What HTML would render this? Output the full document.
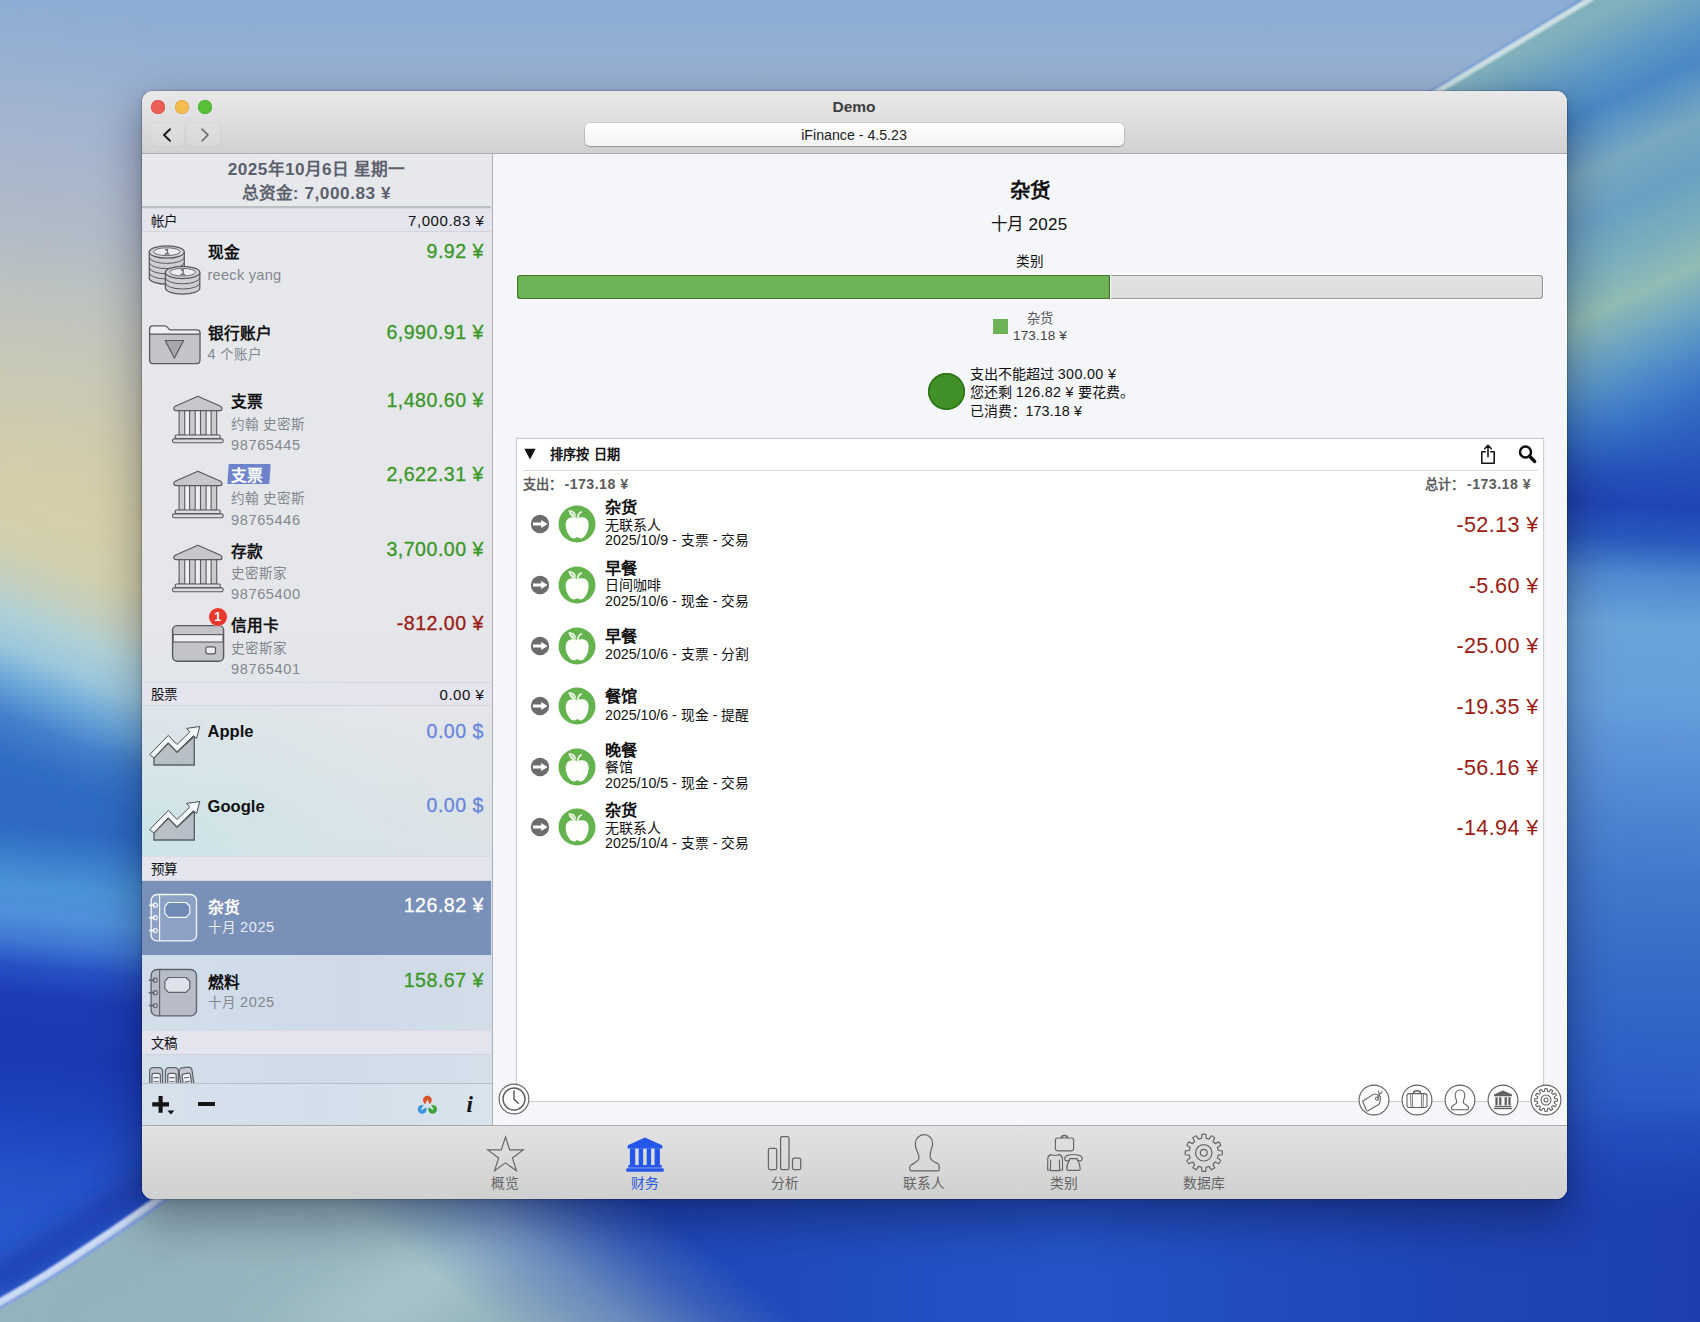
<!DOCTYPE html>
<html lang="zh-CN">
<head>
<meta charset="utf-8">
<title>Demo - iFinance</title>
<style>
*{box-sizing:border-box;margin:0;padding:0}
html,body{width:1700px;height:1322px;overflow:hidden}
body{position:relative;font-family:"Liberation Sans",sans-serif;background:#2a55c0;color:#111}
.abs{position:absolute}
.t{position:absolute;white-space:nowrap;line-height:1}
.b{font-weight:bold}
.r{text-align:right}
.c{text-align:center}
svg{position:absolute;overflow:visible}

#win{position:absolute;left:142px;top:91px;width:1425px;height:1108px;border-radius:11px;background:#f5f6fa;overflow:hidden;
 box-shadow:0 0 0 .6px rgba(0,0,0,.28),0 18px 44px 4px rgba(0,0,28,.33),0 3px 10px rgba(0,0,0,.12)}
#titlebar{position:absolute;left:0;top:0;width:1425px;height:63px;background:linear-gradient(180deg,#e8e8e8 0,#e0e0e0 40%,#d1d1d1 100%);border-bottom:1px solid #adadad}
#botbar{position:absolute;left:0;top:1034px;width:1425px;height:74px;background:linear-gradient(180deg,#e2e2e2 0,#d9d9d9 50%,#cfd0d0 100%);border-top:1px solid #a9a9a9}
#side{position:absolute;left:0;top:62px;width:350px;height:972px;background:#e3e5ea;border-right:1px solid #b9bbc0;overflow:hidden}
.sec{position:absolute;left:0;width:349px;background:#e3e4ee;border-top:1px solid #d2d4dc;border-bottom:1px solid #d6d8e0}
</style>
</head>
<body>
<svg style="left:0;top:0" width="1700" height="1322" viewBox="0 0 1700 1322"><defs><linearGradient id="wl" x1="0" y1="0" x2="0" y2="1"><stop offset="0.0000" stop-color="#8aacd4"/><stop offset="0.0454" stop-color="#95afd2"/><stop offset="0.0908" stop-color="#a0b3d0"/><stop offset="0.1362" stop-color="#a9b6cc"/><stop offset="0.1891" stop-color="#b2bcc6"/><stop offset="0.2269" stop-color="#bcc2c0"/><stop offset="0.2874" stop-color="#c8c8b6"/><stop offset="0.3404" stop-color="#d0cbae"/><stop offset="0.3933" stop-color="#d5cea8"/><stop offset="0.4349" stop-color="#d3cfac"/><stop offset="0.4614" stop-color="#c4cfbc"/><stop offset="0.4841" stop-color="#b0d0d6"/><stop offset="0.5068" stop-color="#9ac7dc"/><stop offset="0.5295" stop-color="#6ba6d8"/><stop offset="0.5522" stop-color="#4381cc"/><stop offset="0.5825" stop-color="#2f6cc4"/><stop offset="0.6278" stop-color="#2e6ac4"/><stop offset="0.6505" stop-color="#3a7ecc"/><stop offset="0.6732" stop-color="#4a92d6"/><stop offset="0.6959" stop-color="#4e90da"/><stop offset="0.7148" stop-color="#4078d4"/><stop offset="0.7337" stop-color="#2852c4"/><stop offset="0.7564" stop-color="#1c3cb4"/><stop offset="0.8018" stop-color="#1a3ab2"/><stop offset="0.8472" stop-color="#1d44bc"/><stop offset="0.8926" stop-color="#2652c8"/><stop offset="0.9455" stop-color="#2a5ace"/><stop offset="1.0000" stop-color="#2c5ccf"/></linearGradient><linearGradient id="wl2" gradientUnits="userSpaceOnUse" x1="75" y1="-5.0" x2="75" y2="1324.3" gradientTransform="rotate(6 75 900)"><stop offset="0.0000" stop-color="#8aacd4"/><stop offset="0.0454" stop-color="#95afd2"/><stop offset="0.0908" stop-color="#a0b3d0"/><stop offset="0.1362" stop-color="#a9b6cc"/><stop offset="0.1891" stop-color="#b2bcc6"/><stop offset="0.2269" stop-color="#bcc2c0"/><stop offset="0.2874" stop-color="#c8c8b6"/><stop offset="0.3404" stop-color="#d0cbae"/><stop offset="0.3933" stop-color="#d5cea8"/><stop offset="0.4349" stop-color="#d3cfac"/><stop offset="0.4614" stop-color="#c4cfbc"/><stop offset="0.4841" stop-color="#b0d0d6"/><stop offset="0.5068" stop-color="#9ac7dc"/><stop offset="0.5295" stop-color="#6ba6d8"/><stop offset="0.5522" stop-color="#4381cc"/><stop offset="0.5825" stop-color="#2f6cc4"/><stop offset="0.6278" stop-color="#2e6ac4"/><stop offset="0.6505" stop-color="#3a7ecc"/><stop offset="0.6732" stop-color="#4a92d6"/><stop offset="0.6959" stop-color="#4e90da"/><stop offset="0.7148" stop-color="#4078d4"/><stop offset="0.7337" stop-color="#2852c4"/><stop offset="0.7564" stop-color="#1c3cb4"/><stop offset="0.8018" stop-color="#1a3ab2"/><stop offset="0.8472" stop-color="#1d44bc"/><stop offset="0.8926" stop-color="#2652c8"/><stop offset="0.9455" stop-color="#2a5ace"/><stop offset="1.0000" stop-color="#2c5ccf"/></linearGradient><linearGradient id="wl3" gradientUnits="userSpaceOnUse" x1="75" y1="-51.0" x2="75" y2="1374.8" gradientTransform="rotate(22 75 650)"><stop offset="0.0000" stop-color="#8aacd4"/><stop offset="0.0454" stop-color="#95afd2"/><stop offset="0.0908" stop-color="#a0b3d0"/><stop offset="0.1362" stop-color="#a9b6cc"/><stop offset="0.1891" stop-color="#b2bcc6"/><stop offset="0.2269" stop-color="#bcc2c0"/><stop offset="0.2874" stop-color="#c8c8b6"/><stop offset="0.3404" stop-color="#d0cbae"/><stop offset="0.3933" stop-color="#d5cea8"/><stop offset="0.4349" stop-color="#d3cfac"/><stop offset="0.4614" stop-color="#c4cfbc"/><stop offset="0.4841" stop-color="#b0d0d6"/><stop offset="0.5068" stop-color="#9ac7dc"/><stop offset="0.5295" stop-color="#6ba6d8"/><stop offset="0.5522" stop-color="#4381cc"/><stop offset="0.5825" stop-color="#2f6cc4"/><stop offset="0.6278" stop-color="#2e6ac4"/><stop offset="0.6505" stop-color="#3a7ecc"/><stop offset="0.6732" stop-color="#4a92d6"/><stop offset="0.6959" stop-color="#4e90da"/><stop offset="0.7148" stop-color="#4078d4"/><stop offset="0.7337" stop-color="#2852c4"/><stop offset="0.7564" stop-color="#1c3cb4"/><stop offset="0.8018" stop-color="#1a3ab2"/><stop offset="0.8472" stop-color="#1d44bc"/><stop offset="0.8926" stop-color="#2652c8"/><stop offset="0.9455" stop-color="#2a5ace"/><stop offset="1.0000" stop-color="#2c5ccf"/></linearGradient><linearGradient id="fl" gradientUnits="userSpaceOnUse" x1="0" y1="420" x2="0" y2="860"><stop offset="0" stop-color="#000"/><stop offset=".25" stop-color="#fff"/><stop offset=".73" stop-color="#fff"/><stop offset="1" stop-color="#000"/></linearGradient><mask id="ml"><rect x="-5" y="0" width="160" height="900" fill="url(#fl)"/></mask><linearGradient id="wru" gradientUnits="userSpaceOnUse" x1="1634" y1="-200" x2="1634" y2="800" gradientTransform="rotate(-25 1634 300)"><stop offset="0.1195" stop-color="#86b4bc"/><stop offset="0.2282" stop-color="#80b0bc"/><stop offset="0.2735" stop-color="#5f98c4"/><stop offset="0.3097" stop-color="#4a88c6"/><stop offset="0.3641" stop-color="#78a8c0"/><stop offset="0.4094" stop-color="#6aa0c2"/><stop offset="0.4547" stop-color="#7aaebd"/><stop offset="0.4955" stop-color="#90bcb4"/><stop offset="0.5362" stop-color="#6da4c2"/><stop offset="0.5725" stop-color="#4f8cc8"/><stop offset="0.6132" stop-color="#3670c6"/><stop offset="0.6540" stop-color="#2752ba"/><stop offset="0.6857" stop-color="#1f45b4"/><stop offset="0.7356" stop-color="#2a5abe"/></linearGradient><linearGradient id="wrl" gradientUnits="userSpaceOnUse" x1="1634" y1="0" x2="1634" y2="1322" gradientTransform="rotate(3 1634 500)"><stop offset="0.2874" stop-color="#4f8cc8"/><stop offset="0.3215" stop-color="#3670c6"/><stop offset="0.3555" stop-color="#2752ba"/><stop offset="0.3820" stop-color="#1f45b4"/><stop offset="0.4085" stop-color="#2a5abe"/><stop offset="0.4349" stop-color="#5088cf"/><stop offset="0.4728" stop-color="#6aa2da"/><stop offset="0.5295" stop-color="#669edb"/><stop offset="0.5749" stop-color="#5a90d6"/><stop offset="0.6203" stop-color="#4d84d0"/><stop offset="0.6657" stop-color="#4278cc"/><stop offset="0.7262" stop-color="#386cc8"/><stop offset="0.8018" stop-color="#2e5fc6"/><stop offset="0.8699" stop-color="#2753c2"/><stop offset="0.9455" stop-color="#1f44b6"/><stop offset="1.0000" stop-color="#1c3cac"/></linearGradient><linearGradient id="fu" gradientUnits="userSpaceOnUse" x1="0" y1="395" x2="0" y2="500"><stop offset="0" stop-color="#fff"/><stop offset="1" stop-color="#000"/></linearGradient><mask id="mu"><rect x="1380" y="-20" width="340" height="600" fill="url(#fu)"/></mask><linearGradient id="wrm" x1="0" y1="0" x2="1" y2="0"><stop offset="0" stop-color="#fff" stop-opacity="0"/><stop offset=".45" stop-color="#fff" stop-opacity="1"/></linearGradient><mask id="mr"><rect x="1380" y="1150" width="320" height="172" fill="url(#wrm)"/></mask><linearGradient id="wb" x1="0" y1="0" x2="1" y2="0"><stop offset="0" stop-color="#2450c0"/><stop offset=".25" stop-color="#1f47b8"/><stop offset=".55" stop-color="#2553c6"/><stop offset=".8" stop-color="#1f46b6"/><stop offset="1" stop-color="#1d3fae"/></linearGradient><linearGradient id="wbm" x1="0" y1="0" x2="0" y2="1"><stop offset="0" stop-color="#fff" stop-opacity="0"/><stop offset=".5" stop-color="#fff" stop-opacity="1"/></linearGradient><mask id="mb"><rect x="300" y="1100" width="1400" height="222" fill="url(#wbm)"/></mask><filter id="b12" x="-20%" y="-20%" width="140%" height="140%"><feGaussianBlur stdDeviation="12"/></filter><filter id="b30" x="-30%" y="-30%" width="160%" height="160%"><feGaussianBlur stdDeviation="28"/></filter><filter id="b2" x="-20%" y="-20%" width="140%" height="140%"><feGaussianBlur stdDeviation="1.1"/></filter><clipPath id="cr1"><path d="M1430 94 Q1511 45 1590 -3 L1702 -3 L1702 1150 L1430 1150 Z"/></clipPath><linearGradient id="tlg" gradientUnits="userSpaceOnUse" x1="470" y1="1304" x2="592" y2="1154"><stop offset="0" stop-color="#fff" stop-opacity="1"/><stop offset=".45" stop-color="#fff" stop-opacity=".6"/><stop offset=".75" stop-color="#fff" stop-opacity=".22"/><stop offset="1" stop-color="#fff" stop-opacity="0"/></linearGradient><mask id="mt"><rect x="-10" y="1150" width="900" height="180" fill="url(#tlg)"/></mask><clipPath id="cbl"><path d="M-6 1307 Q40 1282 90 1248 Q135 1218 172 1192 L900 1192 L900 1330 L-6 1330 Z"/></clipPath></defs><rect width="1700" height="1322" fill="url(#wl)"/><rect x="-5" y="0" width="156" height="1322" fill="url(#wl2)"/><rect x="-5" y="0" width="156" height="900" fill="url(#wl3)" mask="url(#ml)"/><g clip-path="url(#cr1)"><rect x="1380" y="-20" width="330" height="1180" fill="url(#wrl)"/><rect x="1380" y="-20" width="330" height="600" fill="url(#wru)" mask="url(#mu)"/></g><rect x="1380" y="1150" width="330" height="180" fill="url(#wrl)" mask="url(#mr)"/><rect x="300" y="1100" width="1400" height="222" fill="url(#wb)" mask="url(#mb)"/><path d="M1428 93.5 Q1509 44 1588 -3.5" fill="none" stroke="#6a97d6" stroke-width="3" filter="url(#b2)"/><path d="M1433 94 Q1514 45.5 1593 -2.5" fill="none" stroke="#cfe0e4" stroke-width="5.5" filter="url(#b2)"/><g filter="url(#b12)"><path d="M-16 1286 Q30 1262 80 1228 Q125 1198 160 1172" fill="none" stroke="#1b37a6" stroke-width="26" opacity=".75"/></g><g clip-path="url(#cbl)"><g mask="url(#mt)"><rect x="-10" y="1150" width="900" height="180" fill="#96b4bd"/><g filter="url(#b30)"><path d="M250 1340 L520 1190 L600 1190 L400 1340 Z" fill="#a9c6cb"/><path d="M-20 1340 L160 1200 L260 1200 L60 1340 Z" fill="#93b1bc"/></g></g></g><path d="M-6 1310.5 Q41 1285.5 91 1251.5 Q136 1221.5 176 1193" fill="none" stroke="#7d9fe9" stroke-width="3" filter="url(#b2)"/><path d="M-6 1305 Q39 1280.5 88 1247 Q133 1217 171 1190" fill="none" stroke="#cddbf5" stroke-width="7" filter="url(#b2)"/></svg>

<div id="win"><div class="abs" style="left:-142px;top:-91px;width:1700px;height:1322px">
<div id="titlebar" style="left:142px;top:91px"></div>
<div class="abs" style="left:151.3px;top:100.2px;width:14px;height:14px;border-radius:50%;background:#ec5f57;box-shadow:inset 0 0 0 .5px #d14a42"></div>
<div class="abs" style="left:174.7px;top:100.2px;width:14px;height:14px;border-radius:50%;background:#f5bd4f;box-shadow:inset 0 0 0 .5px #d6a03c"></div>
<div class="abs" style="left:198.0px;top:100.2px;width:14px;height:14px;border-radius:50%;background:#57c038;box-shadow:inset 0 0 0 .5px #45a52b"></div>
<div class="abs" style="left:151px;top:123px;width:33px;height:23px;border-radius:5px;background:rgba(255,255,255,.10);box-shadow:0 0 0 .6px rgba(0,0,0,.055)"></div>
<div class="abs" style="left:187px;top:123px;width:33px;height:23px;border-radius:5px;background:rgba(255,255,255,.10);box-shadow:0 0 0 .6px rgba(0,0,0,.055)"></div>
<svg style="left:162px;top:128px;" width="10" height="14" viewBox="0 0 10 14"><path d="M8 1.2 L2 7 L8 12.8" fill="none" stroke="#1d1d1d" stroke-width="2" stroke-linecap="round" stroke-linejoin="round"/></svg>
<svg style="left:200px;top:128px;" width="10" height="14" viewBox="0 0 10 14"><path d="M2 1.2 L8 7 L2 12.8" fill="none" stroke="#6a6a6a" stroke-width="1.6" stroke-linecap="round" stroke-linejoin="round"/></svg>
<div class="t" style="top:99.1px;font-size:15.5px;color:#3e3e3e;font-weight:bold;left:454px;width:800px;text-align:center;">Demo</div>
<div class="abs" style="left:585px;top:123px;width:539px;height:23px;border-radius:5px;background:linear-gradient(#ffffff,#f3f3f3);box-shadow:0 0 0 .5px rgba(0,0,0,.18),0 1px 1.5px rgba(0,0,0,.22)"></div>
<div class="t" style="top:128.2px;font-size:14.2px;color:#222;left:454px;width:800px;text-align:center;">iFinance - 4.5.23</div>
<div id="botbar" style="left:142px;top:1125px"></div>
<div class="abs" style="left:142px;top:154px;width:350.8px;height:971px;border-right:1.3px solid #adb0b8;background:linear-gradient(180deg,#e6e8ec 0,#e4e6ea 540px,#e2e5e8 600px,#dde3e7 680px,#d8e0e8 760px,#d2dcea 860px,#d3dfea 972px)"></div>
<div class="abs" style="left:142px;top:640px;width:349px;height:216px;background:radial-gradient(ellipse 350px 200px at 10px 205px,rgba(200,228,232,.8),rgba(206,228,232,.4) 55%,rgba(214,228,232,0) 100%)"></div>
<div class="t" style="top:161.4px;font-size:17.2px;color:#5b606c;font-weight:bold;letter-spacing:0.45px;left:-83.5px;width:800px;text-align:center;">2025<span style="font-size:0.97em;letter-spacing:0">年</span>10<span style="font-size:0.97em;letter-spacing:0">月</span>6<span style="font-size:0.97em;letter-spacing:0">日</span> <span style="font-size:0.97em;letter-spacing:0">星期一</span></div>
<div class="t" style="top:185.0px;font-size:17.2px;color:#5b606c;font-weight:bold;letter-spacing:0.55px;left:-83.5px;width:800px;text-align:center;"><span style="font-size:0.97em;letter-spacing:0">总资金</span>: 7,000.83 ¥</div>
<div class="abs" style="left:142px;top:206.4px;width:349px;height:1.4px;background:#bcbfc6"></div>
<div class="abs" style="left:142px;top:208px;width:349px;height:24px;background:#e3e4ee;border-bottom:1px solid #d3d5de;border-top:1px solid #d9dbe3"></div>
<div class="t" style="top:214.6px;font-size:13.5px;color:#111;left:151px;">帐户</div>
<div class="t" style="top:213.4px;font-size:15px;color:#111;letter-spacing:0.55px;right:1215.5px;">7,000.83 ¥</div>
<svg style="left:148px;top:243px;" width="54" height="54" viewBox="0 0 54 54"><path d="M1.3000000000000007 9.0 V35.0 A17.5 6.2 0 0 0 36.3 35.0 V9.0 Z" fill="#cfd0d3" stroke="#585a5e" stroke-width="1.25"/><path d="M1.3000000000000007 14.2 A17.5 6.2 0 0 0 36.3 14.2" fill="none" stroke="#585a5e" stroke-width="1"/><path d="M1.3000000000000007 19.4 A17.5 6.2 0 0 0 36.3 19.4" fill="none" stroke="#585a5e" stroke-width="1"/><path d="M1.3000000000000007 24.6 A17.5 6.2 0 0 0 36.3 24.6" fill="none" stroke="#585a5e" stroke-width="1"/><path d="M1.3000000000000007 29.8 A17.5 6.2 0 0 0 36.3 29.8" fill="none" stroke="#585a5e" stroke-width="1"/><ellipse cx="18.8" cy="9.0" rx="17.5" ry="6.2" fill="#d2d3d6" stroke="#585a5e" stroke-width="1.25"/><ellipse cx="18.8" cy="8.7" rx="13.2" ry="3.9000000000000004" fill="#eeeef0" stroke="#636569" stroke-width=".95"/><path d="M17.0 6.8 L19.400000000000002 6.4 V10.8 M16.6 11.0 H21.400000000000002" fill="none" stroke="#6e7074" stroke-width="1.4"/><path d="M17.400000000000002 29.5 V45.1 A17.2 6.1 0 0 0 51.8 45.1 V29.5 Z" fill="#cfd0d3" stroke="#585a5e" stroke-width="1.25"/><path d="M17.400000000000002 34.7 A17.2 6.1 0 0 0 51.8 34.7" fill="none" stroke="#585a5e" stroke-width="1"/><path d="M17.400000000000002 39.9 A17.2 6.1 0 0 0 51.8 39.9" fill="none" stroke="#585a5e" stroke-width="1"/><ellipse cx="34.6" cy="29.5" rx="17.2" ry="6.1" fill="#d2d3d6" stroke="#585a5e" stroke-width="1.25"/><ellipse cx="34.6" cy="29.2" rx="12.899999999999999" ry="3.8" fill="#eeeef0" stroke="#636569" stroke-width=".95"/><path d="M32.800000000000004 27.3 L35.2 26.9 V31.3 M32.4 31.5 H37.2" fill="none" stroke="#6e7074" stroke-width="1.4"/></svg>
<div class="t" style="top:245.3px;font-size:15.7px;color:#111;font-weight:bold;left:207.5px;">现金</div>
<div class="t" style="top:268.0px;font-size:14.6px;color:#84878f;letter-spacing:0.25px;left:207.5px;">reeck yang</div>
<div class="t" style="top:241.6px;font-size:19.6px;color:#3a9826;letter-spacing:0.5px;right:1216px;-webkit-text-stroke:.3px currentColor;">9.92 ¥</div>
<svg style="left:148px;top:324px;" width="54" height="42" viewBox="0 0 54 42"><path d="M1.6 5 Q1.6 1.8 4.6 1.8 H16.5 Q18.3 1.8 19.4 3.2 L20.6 4.7 Q21.6 5.8 23.4 5.8 H49 Q52 5.8 52 8.6 V10.6 H1.6 Z" fill="#f1f1f3" stroke="#585a5e" stroke-width="1.3" stroke-linejoin="round"/><path d="M1.6 10.2 H52 V36 Q52 39.6 48.6 39.6 H5 Q1.6 39.6 1.6 36 Z" fill="#c3c4c8" stroke="#585a5e" stroke-width="1.3" stroke-linejoin="round"/><path d="M17.2 16.5 H35.6 L26.4 34 Z" fill="#a7a8ac" stroke="#585a5e" stroke-width="1.2" stroke-linejoin="round"/></svg>
<div class="t" style="top:326.3px;font-size:15.7px;color:#111;font-weight:bold;left:207.5px;">银行账户</div>
<div class="t" style="top:347.1px;font-size:14.4px;color:#84878f;left:207.5px;">4 <span style="font-size:0.94em;letter-spacing:0">个账户</span></div>
<div class="t" style="top:323.1px;font-size:19.6px;color:#3a9826;letter-spacing:0.5px;right:1216px;-webkit-text-stroke:.3px currentColor;">6,990.91 ¥</div>
<svg style="left:171px;top:395px;" width="54" height="49" viewBox="0 0 54 49"><rect x="8" y="15.6" width="38" height="24.6" fill="#efeff1"/><path d="M26.85 1.2 L49.6 11.2 Q51.4 12.2 51 14 Q50.6 15.7 48.6 15.7 H5.2 Q3.2 15.7 2.8 14 Q2.4 12.2 4.2 11.2 Z" fill="#c6c7ca" stroke="#585a5e" stroke-width="1.2" stroke-linejoin="round"/><rect x="8.1" y="15.7" width="5.6" height="24.4" fill="#cbccce" stroke="#585a5e" stroke-width="1.1"/><rect x="18.6" y="15.7" width="5.6" height="24.4" fill="#cbccce" stroke="#585a5e" stroke-width="1.1"/><rect x="29.5" y="15.7" width="5.6" height="24.4" fill="#cbccce" stroke="#585a5e" stroke-width="1.1"/><rect x="40.1" y="15.7" width="5.6" height="24.4" fill="#cbccce" stroke="#585a5e" stroke-width="1.1"/><rect x="4.2" y="40" width="45" height="3.6" rx="1" fill="#dcdddf" stroke="#585a5e" stroke-width="1.1"/><rect x="1.5" y="43.9" width="50.7" height="3.8" rx="1.6" fill="#dcdddf" stroke="#585a5e" stroke-width="1.1"/></svg>
<div class="t" style="top:394.3px;font-size:15.7px;color:#111;font-weight:bold;left:231px;">支票</div>
<div class="t" style="top:417.8px;font-size:13.6px;color:#84878f;left:231px;">约翰 史密斯</div>
<div class="t" style="top:438.3px;font-size:14.6px;color:#84878f;letter-spacing:0.6px;left:231px;">98765445</div>
<div class="t" style="top:390.8px;font-size:19.6px;color:#3a9826;letter-spacing:0.5px;right:1216px;-webkit-text-stroke:.3px currentColor;">1,480.60 ¥</div>
<svg style="left:171px;top:469.6px;" width="54" height="49" viewBox="0 0 54 49"><rect x="8" y="15.6" width="38" height="24.6" fill="#efeff1"/><path d="M26.85 1.2 L49.6 11.2 Q51.4 12.2 51 14 Q50.6 15.7 48.6 15.7 H5.2 Q3.2 15.7 2.8 14 Q2.4 12.2 4.2 11.2 Z" fill="#c6c7ca" stroke="#585a5e" stroke-width="1.2" stroke-linejoin="round"/><rect x="8.1" y="15.7" width="5.6" height="24.4" fill="#cbccce" stroke="#585a5e" stroke-width="1.1"/><rect x="18.6" y="15.7" width="5.6" height="24.4" fill="#cbccce" stroke="#585a5e" stroke-width="1.1"/><rect x="29.5" y="15.7" width="5.6" height="24.4" fill="#cbccce" stroke="#585a5e" stroke-width="1.1"/><rect x="40.1" y="15.7" width="5.6" height="24.4" fill="#cbccce" stroke="#585a5e" stroke-width="1.1"/><rect x="4.2" y="40" width="45" height="3.6" rx="1" fill="#dcdddf" stroke="#585a5e" stroke-width="1.1"/><rect x="1.5" y="43.9" width="50.7" height="3.8" rx="1.6" fill="#dcdddf" stroke="#585a5e" stroke-width="1.1"/></svg>
<div class="abs" style="left:227.6px;top:464.4px;width:42px;height:20px;background:#6d84cc;transform:skewX(-4deg);border-radius:1px"></div>
<div class="t" style="top:468.3px;font-size:15.7px;color:#fff;font-weight:bold;left:231px;">支票</div>
<div class="t" style="top:492.2px;font-size:13.6px;color:#84878f;left:231px;">约翰 史密斯</div>
<div class="t" style="top:512.7px;font-size:14.6px;color:#84878f;letter-spacing:0.6px;left:231px;">98765446</div>
<div class="t" style="top:465.3px;font-size:19.6px;color:#3a9826;letter-spacing:0.5px;right:1216px;-webkit-text-stroke:.3px currentColor;">2,622.31 ¥</div>
<svg style="left:171px;top:544.3px;" width="54" height="49" viewBox="0 0 54 49"><rect x="8" y="15.6" width="38" height="24.6" fill="#efeff1"/><path d="M26.85 1.2 L49.6 11.2 Q51.4 12.2 51 14 Q50.6 15.7 48.6 15.7 H5.2 Q3.2 15.7 2.8 14 Q2.4 12.2 4.2 11.2 Z" fill="#c6c7ca" stroke="#585a5e" stroke-width="1.2" stroke-linejoin="round"/><rect x="8.1" y="15.7" width="5.6" height="24.4" fill="#cbccce" stroke="#585a5e" stroke-width="1.1"/><rect x="18.6" y="15.7" width="5.6" height="24.4" fill="#cbccce" stroke="#585a5e" stroke-width="1.1"/><rect x="29.5" y="15.7" width="5.6" height="24.4" fill="#cbccce" stroke="#585a5e" stroke-width="1.1"/><rect x="40.1" y="15.7" width="5.6" height="24.4" fill="#cbccce" stroke="#585a5e" stroke-width="1.1"/><rect x="4.2" y="40" width="45" height="3.6" rx="1" fill="#dcdddf" stroke="#585a5e" stroke-width="1.1"/><rect x="1.5" y="43.9" width="50.7" height="3.8" rx="1.6" fill="#dcdddf" stroke="#585a5e" stroke-width="1.1"/></svg>
<div class="t" style="top:543.5px;font-size:15.7px;color:#111;font-weight:bold;left:231px;">存款</div>
<div class="t" style="top:566.9px;font-size:13.6px;color:#84878f;left:231px;">史密斯家</div>
<div class="t" style="top:587.4px;font-size:14.6px;color:#84878f;letter-spacing:0.6px;left:231px;">98765400</div>
<div class="t" style="top:539.9px;font-size:19.6px;color:#3a9826;letter-spacing:0.5px;right:1216px;-webkit-text-stroke:.3px currentColor;">3,700.00 ¥</div>
<svg style="left:171px;top:624px;" width="54" height="39" viewBox="0 0 54 39"><rect x="1.6" y="1.6" width="51" height="35.6" rx="4.6" fill="#c3c4c8" stroke="#585a5e" stroke-width="1.4"/><rect x="2.2" y="10.6" width="49.8" height="7.4" fill="#f0f0f2" stroke="#585a5e" stroke-width="1.1"/><rect x="34.9" y="22.8" width="9.6" height="7" rx="2" fill="#f0f0f2" stroke="#585a5e" stroke-width="1.2"/></svg>
<div class="abs c" style="left:208.6px;top:608px;width:18.4px;height:18.4px;border-radius:50%;background:#e8382e;color:#fff;font-size:12.5px;font-weight:bold;line-height:18.4px;box-shadow:0 0 0 .6px rgba(255,200,200,.6)">1</div>
<div class="t" style="top:618.1px;font-size:15.7px;color:#111;font-weight:bold;left:231px;">信用卡</div>
<div class="t" style="top:641.5px;font-size:13.6px;color:#84878f;left:231px;">史密斯家</div>
<div class="t" style="top:661.6px;font-size:14.6px;color:#84878f;letter-spacing:0.6px;left:231px;">98765401</div>
<div class="t" style="top:614.2px;font-size:19.6px;color:#9c1a14;letter-spacing:0.5px;right:1216px;-webkit-text-stroke:.3px currentColor;">-812.00 ¥</div>
<div class="abs" style="left:142px;top:682px;width:349px;height:24px;background:#e3e4ee;border-bottom:1px solid #d3d5de;border-top:1px solid #d9dbe3"></div>
<div class="t" style="top:688.0px;font-size:13.5px;color:#111;left:151px;">股票</div>
<div class="t" style="top:686.8px;font-size:15px;color:#111;letter-spacing:0.55px;right:1215.5px;">0.00 ¥</div>
<svg style="left:142px;top:716px;" width="70" height="60" viewBox="0 0 70 60"><defs><linearGradient id="cg" x1="0" y1="0" x2="1" y2="1"><stop offset="0" stop-color="#bcc6c8"/><stop offset="1" stop-color="#b4bcc6"/></linearGradient></defs><path d="M12 42 V49 H52.3 V20.2 L35 36.2 L26.3 27.2 Z" fill="url(#cg)" stroke="#5a6066" stroke-width="1.35" stroke-linejoin="miter"/><path d="M7.7 38.6 L26.3 19.4 L35 28.5 L47.7 16 L44.6 12.4 L57.8 10.5 L54.5 22.6 L51.5 19.6 L35 35.7 L26.3 26.7 L11.8 41.9 Z" fill="#f3f7f7" stroke="#484e52" stroke-width="1.0" stroke-linejoin="miter"/></svg>
<div class="t" style="top:724.0px;font-size:16.6px;color:#111;font-weight:bold;left:207.5px;">Apple</div>
<div class="t" style="top:721.6px;font-size:19.6px;color:#6a85dc;letter-spacing:0.5px;right:1216px;-webkit-text-stroke:.3px currentColor;">0.00 $</div>
<svg style="left:142px;top:790.6px;" width="70" height="60" viewBox="0 0 70 60"><defs><linearGradient id="cg" x1="0" y1="0" x2="1" y2="1"><stop offset="0" stop-color="#bcc6c8"/><stop offset="1" stop-color="#b4bcc6"/></linearGradient></defs><path d="M12 42 V49 H52.3 V20.2 L35 36.2 L26.3 27.2 Z" fill="url(#cg)" stroke="#5a6066" stroke-width="1.35" stroke-linejoin="miter"/><path d="M7.7 38.6 L26.3 19.4 L35 28.5 L47.7 16 L44.6 12.4 L57.8 10.5 L54.5 22.6 L51.5 19.6 L35 35.7 L26.3 26.7 L11.8 41.9 Z" fill="#f3f7f7" stroke="#484e52" stroke-width="1.0" stroke-linejoin="miter"/></svg>
<div class="t" style="top:798.5px;font-size:16.6px;color:#111;font-weight:bold;left:207.5px;">Google</div>
<div class="t" style="top:796.2px;font-size:19.6px;color:#6a85dc;letter-spacing:0.5px;right:1216px;-webkit-text-stroke:.3px currentColor;">0.00 $</div>
<div class="abs" style="left:142px;top:856px;width:349px;height:25px;background:#e3e4ee;border-bottom:1px solid #d3d5de;border-top:1px solid #d9dbe3"></div>
<div class="t" style="top:862.5px;font-size:13.5px;color:#111;left:151px;">预算</div>
<div class="abs" style="left:142px;top:881px;width:349px;height:74px;background:#7990b8"></div>
<svg style="left:149px;top:892px;" width="50" height="52" viewBox="0 0 50 52"><rect x="2.1" y="2.5" width="45.4" height="46.4" rx="6" fill="rgba(170,186,216,.42)" stroke="#f4f7fb" stroke-width="1.35"/><path d="M10.6 2.6 V48.8" stroke="#f4f7fb" stroke-width="1.1475"/><path d="M19.4 10.5 H37 L40.8 14.3 V21.4 L37 25.3 H19.4 L15.8 21.4 V14.3 Z" fill="#7189b5" stroke="#f4f7fb" stroke-width="1.215" stroke-linejoin="round"/><circle cx="6.3" cy="13.2" r="2.1" fill="rgba(170,185,214,.15)" stroke="#f4f7fb" stroke-width="1.08"/><path d="M0.4 13.2 H5.2" stroke="#f4f7fb" stroke-width="1.4850000000000003" stroke-linecap="round"/><circle cx="6.3" cy="25.7" r="2.1" fill="rgba(170,185,214,.15)" stroke="#f4f7fb" stroke-width="1.08"/><path d="M0.4 25.7 H5.2" stroke="#f4f7fb" stroke-width="1.4850000000000003" stroke-linecap="round"/><circle cx="6.3" cy="38.6" r="2.1" fill="rgba(170,185,214,.15)" stroke="#f4f7fb" stroke-width="1.08"/><path d="M0.4 38.6 H5.2" stroke="#f4f7fb" stroke-width="1.4850000000000003" stroke-linecap="round"/></svg>
<div class="t" style="top:899.8px;font-size:15.7px;color:#fff;font-weight:bold;left:207.5px;">杂货</div>
<div class="t" style="top:920.3px;font-size:14.6px;color:#e8edf6;letter-spacing:0.55px;left:207.5px;"><span style="font-size:0.93em;letter-spacing:0">十月</span> 2025</div>
<div class="t" style="top:896.2px;font-size:19.6px;color:#fff;letter-spacing:0.5px;right:1216px;-webkit-text-stroke:.3px currentColor;">126.82 ¥</div>
<div class="abs" style="left:142px;top:955px;width:349px;height:75px;background:linear-gradient(90deg,#d2deea,#cfd9e8 60%,#d2dde9)"></div>
<svg style="left:149px;top:966.7px;" width="50" height="52" viewBox="0 0 50 52"><rect x="2.1" y="2.5" width="45.4" height="46.4" rx="6" fill="#b7bcc8" stroke="#5e636c" stroke-width="1.35"/><path d="M10.6 2.6 V48.8" stroke="#5e636c" stroke-width="1.1475"/><path d="M19.4 10.5 H37 L40.8 14.3 V21.4 L37 25.3 H19.4 L15.8 21.4 V14.3 Z" fill="#dfe2ea" stroke="#5e636c" stroke-width="1.215" stroke-linejoin="round"/><circle cx="6.3" cy="13.2" r="2.1" fill="#c8ccd6" stroke="#5e636c" stroke-width="1.08"/><path d="M0.4 13.2 H5.2" stroke="#5e636c" stroke-width="1.4850000000000003" stroke-linecap="round"/><circle cx="6.3" cy="25.7" r="2.1" fill="#c8ccd6" stroke="#5e636c" stroke-width="1.08"/><path d="M0.4 25.7 H5.2" stroke="#5e636c" stroke-width="1.4850000000000003" stroke-linecap="round"/><circle cx="6.3" cy="38.6" r="2.1" fill="#c8ccd6" stroke="#5e636c" stroke-width="1.08"/><path d="M0.4 38.6 H5.2" stroke="#5e636c" stroke-width="1.4850000000000003" stroke-linecap="round"/></svg>
<div class="t" style="top:974.5px;font-size:15.7px;color:#111;font-weight:bold;left:207.5px;">燃料</div>
<div class="t" style="top:994.6px;font-size:14.6px;color:#84878f;letter-spacing:0.55px;left:207.5px;"><span style="font-size:0.93em;letter-spacing:0">十月</span> 2025</div>
<div class="t" style="top:971.0px;font-size:19.6px;color:#3a9826;letter-spacing:0.5px;right:1216px;-webkit-text-stroke:.3px currentColor;">158.67 ¥</div>
<div class="abs" style="left:142px;top:1030px;width:349px;height:25px;background:#e3e4ee;border-bottom:1px solid #d3d5de;border-top:1px solid #d9dbe3"></div>
<div class="t" style="top:1036.5px;font-size:13.5px;color:#111;left:151px;">文稿</div>
<div class="abs" style="left:142px;top:1055px;width:349.5px;height:28.3px;background:linear-gradient(90deg,#d3dfe9,#cfdce8 50%,#d3dfe9);overflow:hidden"><svg style="left:6px;top:11px" width="50" height="24" viewBox="0 0 50 24"><g stroke="#5e636b" stroke-width="1.25"><rect x="1.6" y="1.6" width="13" height="26" rx="3.6" fill="#c3c8d1"/><rect x="17.4" y="1.6" width="13" height="26" rx="3.6" fill="#c3c8d1"/><g transform="rotate(-8 39 16)"><rect x="32.6" y="1.4" width="13" height="26" rx="3.6" fill="#c3c8d1"/><rect x="35" y="7.4" width="8.4" height="14" rx="2" fill="#eef1f5"/><path d="M36.6 11.6 H41.8 M36.6 15.8 H41.8" stroke-width="1.1"/></g><rect x="4" y="7.4" width="8.4" height="14" rx="2" fill="#eef1f5"/><rect x="19.8" y="7.4" width="8.4" height="14" rx="2" fill="#eef1f5"/><path d="M5.6 11.6 H10.8 M5.6 15.8 H10.8 M21.4 11.6 H26.6 M21.4 15.8 H26.6" stroke-width="1.1"/></g></svg></div>
<div class="abs" style="left:142px;top:1083.3px;width:349.5px;height:41.7px;background:linear-gradient(90deg,#d6e1ec,#d3deea 50%,#d9e3ec);border-top:1px solid #b9c0c9"></div>
<svg style="left:150px;top:1094px" width="28" height="22" viewBox="0 0 28 22"><path d="M2.2 10.4 H19 M10.6 2 V18.8" stroke="#151515" stroke-width="4.1" fill="none"/><path d="M17.4 16.6 H24.4 L20.9 20.4 Z" fill="#151515"/></svg>
<div class="abs" style="left:197.5px;top:1102.2px;width:17.6px;height:3.9px;background:#151515"></div>
<svg style="left:416px;top:1094px" width="24" height="22" viewBox="416 1094 24 22"><circle cx="427.4" cy="1100.1" r="4.4" fill="#dd5426"/><circle cx="422.2" cy="1109.3" r="4.4" fill="#3a96dc"/><circle cx="432.6" cy="1109.3" r="4.4" fill="#40a43c"/><path d="M427.4 1099.4 L430.2 1105.4 L427.4 1107.6 L424.6 1105.4 Z M427.4 1106.2 L422.6 1107.6 L421.2 1110.6 Z M427.4 1106.2 L432.2 1107.6 L433.6 1110.6 Z" fill="#d9e3ec"/><path d="M427.4 1106.2 L420.8 1109.4 L424.6 1104 Z M427.4 1106.2 L434 1109.4 L430.2 1104 Z" fill="#d9e3ec"/></svg>
<div class="t" style="left:466.6px;top:1093px;font-family:'Liberation Serif',serif;font-style:italic;font-weight:bold;font-size:23px;color:#151515">i</div>
<div class="abs" style="left:493px;top:154px;width:1074px;height:971px;background:#f5f6fa"></div>
<div class="t" style="top:181.2px;font-size:20.5px;color:#111;font-weight:bold;left:629.5px;width:800px;text-align:center;">杂货</div>
<div class="t" style="top:216.1px;font-size:17px;color:#111;letter-spacing:0.3px;left:629.5px;width:800px;text-align:center;"><span style="font-size:0.97em;letter-spacing:0">十月</span> 2025</div>
<div class="t" style="top:254.8px;font-size:13.6px;color:#111;left:629.5px;width:800px;text-align:center;">类别</div>
<div class="abs" style="left:516.6px;top:274.7px;width:1026px;height:24.5px;border-radius:3.5px;background:linear-gradient(#e2e2e2,#dcdcdc);box-shadow:inset 0 0 0 1.1px #989898,0 0 0 1.4px rgba(255,255,255,.75)"></div>
<div class="abs" style="left:516.6px;top:274.7px;width:593px;height:24.5px;border-radius:3.5px 0 0 3.5px;background:#6eb355;box-shadow:inset 0 0 0 1.1px #3b7428,1.2px 0 0 0 #f4f4f4"></div>
<div class="abs" style="left:993px;top:319px;width:14.5px;height:14.5px;background:#6db356"></div>
<div class="t" style="top:311.7px;font-size:13.2px;color:#555;left:640px;width:800px;text-align:center;">杂货</div>
<div class="t" style="top:329.0px;font-size:13.6px;color:#444;letter-spacing:0.15px;left:640px;width:800px;text-align:center;">173.18 ¥</div>
<div class="abs" style="left:927.5px;top:372.5px;width:37px;height:37px;border-radius:50%;background:#418f27;box-shadow:inset 0 0 0 1.6px #2c7414"></div>
<div class="t" style="top:366.6px;font-size:14.3px;color:#111;letter-spacing:0.35px;left:969.5px;"><span style="font-size:0.985em;letter-spacing:0">支出不能超过</span> 300.00 ¥</div>
<div class="t" style="top:385.3px;font-size:14.3px;color:#111;letter-spacing:0.3px;left:969.5px;"><span style="font-size:0.985em;letter-spacing:0">您还剩</span> 126.82 ¥ <span style="font-size:0.985em;letter-spacing:0">要花费。</span></div>
<div class="t" style="top:404.1px;font-size:14.3px;color:#111;letter-spacing:0.1px;left:969.5px;"><span style="font-size:0.97em;letter-spacing:0">已消费：</span>173.18 ¥</div>
<div class="abs" style="left:515.5px;top:437.5px;width:1028.5px;height:664px;background:#fff;border:1px solid #cfd0d4;border-top-color:#c6c7cb;box-shadow:0 0 0 .5px rgba(0,0,0,.04)"></div>

<div class="abs" style="left:523px;top:469.5px;width:1014.5px;height:1.1px;background:#d6d6d9"></div>
<svg style="left:523px;top:448px" width="14" height="13" viewBox="0 0 14 13"><path d="M1.4 0.8 H12.6 L7 11.6 Z" fill="#111"/></svg>
<div class="t" style="top:448.0px;font-size:13.1px;color:#111;font-weight:bold;letter-spacing:0.4px;left:549.5px;">排序按 日期</div>
<svg style="left:1478px;top:442px" width="22" height="24" viewBox="0 0 22 24"><g fill="none" stroke="#141414" stroke-width="1.55" stroke-linejoin="round" stroke-linecap="round"><path d="M7.4 9.8 H3.8 V21.3 H16.2 V9.8 H12.8"/><path d="M10 14.8 V3.6 M6.7 6.7 L10 3.2 L13.3 6.7"/></g></svg>
<svg style="left:1515px;top:442px" width="24" height="24" viewBox="0 0 24 24"><circle cx="10.5" cy="10" r="5.5" fill="none" stroke="#0e0e0e" stroke-width="2.5"/><path d="M14.6 14.2 L19.6 19.4" stroke="#0e0e0e" stroke-width="3.5" stroke-linecap="round"/></svg>
<div class="t" style="top:477.0px;font-size:14.2px;color:#5b5b5b;font-weight:bold;letter-spacing:0.45px;left:522.5px;"><span style="font-size:0.93em;letter-spacing:0">支出：</span><span style="margin-left:3px">-173.18 ¥</span></div>
<div class="t" style="top:477.0px;font-size:14.2px;color:#5b5b5b;font-weight:bold;letter-spacing:0.45px;right:169px;"><span style="font-size:0.93em;letter-spacing:0">总计：</span><span style="margin-left:3px">-173.18 ¥</span></div>
<svg style="left:530.3px;top:514.2px" width="20" height="20" viewBox="0 0 20 20"><circle cx="10" cy="10" r="9.2" fill="#6c6c6c"/><path d="M3 8.5 H11.2 V5.9 L17.6 10 L11.2 14.1 V11.5 H3 Z" fill="#fff"/></svg>
<svg style="left:558.4px;top:505.20000000000005px" width="38" height="38" viewBox="0 0 38 38"><circle cx="19" cy="19" r="18.5" fill="#64b34e"/><path d="M19.2 13.5 C21.2 12 25.4 11.7 27.8 13.3 C31 15.5 31.2 20.3 29.9 24.7 C28.7 28.7 26.4 32.5 23.6 33.3 C22 33.7 20.8 33.3 19.4 32.1 C18 33.3 16.6 33.7 15 33.3 C12.2 32.5 9.6 28.7 8.4 24.7 C7.1 20.3 7.5 15.3 10.7 13.3 C13.2 11.7 17.2 12 19.2 13.5 Z" fill="#fdfffb"/><path d="M10.3 5.3 C14.4 4.6 18.2 6.8 18.3 12.7 C13.8 12.9 11.5 9.6 10.3 5.3 Z" fill="#f0f8ea"/><path d="M12.6 7.2 C15 8.2 16.8 10 17.6 12.2" fill="none" stroke="#64b34e" stroke-width=".75"/><path d="M19.7 13 C19.9 10.2 21 8.2 23.3 7.1" fill="none" stroke="#f4fbf0" stroke-width="1.7" stroke-linecap="round"/></svg>
<div class="t" style="top:499.0px;font-size:16.2px;color:#111;font-weight:bold;left:605px;">杂货</div>
<div class="t" style="top:517.7px;font-size:14px;color:#111;left:605px;">无联系人</div>
<div class="t" style="top:533.2px;font-size:14.2px;color:#111;letter-spacing:0px;left:605px;">2025/10/9 - <span style="font-size:0.97em;letter-spacing:0">支票</span> - <span style="font-size:0.97em;letter-spacing:0">交易</span></div>
<div class="t" style="top:514.0px;font-size:21.6px;color:#9b1b13;letter-spacing:0.35px;right:161.5px;">-52.13 ¥</div>
<svg style="left:530.3px;top:574.9px" width="20" height="20" viewBox="0 0 20 20"><circle cx="10" cy="10" r="9.2" fill="#6c6c6c"/><path d="M3 8.5 H11.2 V5.9 L17.6 10 L11.2 14.1 V11.5 H3 Z" fill="#fff"/></svg>
<svg style="left:558.4px;top:565.9px" width="38" height="38" viewBox="0 0 38 38"><circle cx="19" cy="19" r="18.5" fill="#64b34e"/><path d="M19.2 13.5 C21.2 12 25.4 11.7 27.8 13.3 C31 15.5 31.2 20.3 29.9 24.7 C28.7 28.7 26.4 32.5 23.6 33.3 C22 33.7 20.8 33.3 19.4 32.1 C18 33.3 16.6 33.7 15 33.3 C12.2 32.5 9.6 28.7 8.4 24.7 C7.1 20.3 7.5 15.3 10.7 13.3 C13.2 11.7 17.2 12 19.2 13.5 Z" fill="#fdfffb"/><path d="M10.3 5.3 C14.4 4.6 18.2 6.8 18.3 12.7 C13.8 12.9 11.5 9.6 10.3 5.3 Z" fill="#f0f8ea"/><path d="M12.6 7.2 C15 8.2 16.8 10 17.6 12.2" fill="none" stroke="#64b34e" stroke-width=".75"/><path d="M19.7 13 C19.9 10.2 21 8.2 23.3 7.1" fill="none" stroke="#f4fbf0" stroke-width="1.7" stroke-linecap="round"/></svg>
<div class="t" style="top:559.7px;font-size:16.2px;color:#111;font-weight:bold;left:605px;">早餐</div>
<div class="t" style="top:578.4px;font-size:14px;color:#111;left:605px;">日间咖啡</div>
<div class="t" style="top:593.9px;font-size:14.2px;color:#111;letter-spacing:0px;left:605px;">2025/10/6 - <span style="font-size:0.97em;letter-spacing:0">现金</span> - <span style="font-size:0.97em;letter-spacing:0">交易</span></div>
<div class="t" style="top:574.7px;font-size:21.6px;color:#9b1b13;letter-spacing:0.35px;right:161.5px;">-5.60 ¥</div>
<svg style="left:530.3px;top:635.6px" width="20" height="20" viewBox="0 0 20 20"><circle cx="10" cy="10" r="9.2" fill="#6c6c6c"/><path d="M3 8.5 H11.2 V5.9 L17.6 10 L11.2 14.1 V11.5 H3 Z" fill="#fff"/></svg>
<svg style="left:558.4px;top:626.6px" width="38" height="38" viewBox="0 0 38 38"><circle cx="19" cy="19" r="18.5" fill="#64b34e"/><path d="M19.2 13.5 C21.2 12 25.4 11.7 27.8 13.3 C31 15.5 31.2 20.3 29.9 24.7 C28.7 28.7 26.4 32.5 23.6 33.3 C22 33.7 20.8 33.3 19.4 32.1 C18 33.3 16.6 33.7 15 33.3 C12.2 32.5 9.6 28.7 8.4 24.7 C7.1 20.3 7.5 15.3 10.7 13.3 C13.2 11.7 17.2 12 19.2 13.5 Z" fill="#fdfffb"/><path d="M10.3 5.3 C14.4 4.6 18.2 6.8 18.3 12.7 C13.8 12.9 11.5 9.6 10.3 5.3 Z" fill="#f0f8ea"/><path d="M12.6 7.2 C15 8.2 16.8 10 17.6 12.2" fill="none" stroke="#64b34e" stroke-width=".75"/><path d="M19.7 13 C19.9 10.2 21 8.2 23.3 7.1" fill="none" stroke="#f4fbf0" stroke-width="1.7" stroke-linecap="round"/></svg>
<div class="t" style="top:627.6px;font-size:16.2px;color:#111;font-weight:bold;left:605px;">早餐</div>
<div class="t" style="top:647.0px;font-size:14.2px;color:#111;letter-spacing:0px;left:605px;">2025/10/6 - <span style="font-size:0.97em;letter-spacing:0">支票</span> - <span style="font-size:0.97em;letter-spacing:0">分割</span></div>
<div class="t" style="top:635.4px;font-size:21.6px;color:#9b1b13;letter-spacing:0.35px;right:161.5px;">-25.00 ¥</div>
<svg style="left:530.3px;top:696.2px" width="20" height="20" viewBox="0 0 20 20"><circle cx="10" cy="10" r="9.2" fill="#6c6c6c"/><path d="M3 8.5 H11.2 V5.9 L17.6 10 L11.2 14.1 V11.5 H3 Z" fill="#fff"/></svg>
<svg style="left:558.4px;top:687.2px" width="38" height="38" viewBox="0 0 38 38"><circle cx="19" cy="19" r="18.5" fill="#64b34e"/><path d="M19.2 13.5 C21.2 12 25.4 11.7 27.8 13.3 C31 15.5 31.2 20.3 29.9 24.7 C28.7 28.7 26.4 32.5 23.6 33.3 C22 33.7 20.8 33.3 19.4 32.1 C18 33.3 16.6 33.7 15 33.3 C12.2 32.5 9.6 28.7 8.4 24.7 C7.1 20.3 7.5 15.3 10.7 13.3 C13.2 11.7 17.2 12 19.2 13.5 Z" fill="#fdfffb"/><path d="M10.3 5.3 C14.4 4.6 18.2 6.8 18.3 12.7 C13.8 12.9 11.5 9.6 10.3 5.3 Z" fill="#f0f8ea"/><path d="M12.6 7.2 C15 8.2 16.8 10 17.6 12.2" fill="none" stroke="#64b34e" stroke-width=".75"/><path d="M19.7 13 C19.9 10.2 21 8.2 23.3 7.1" fill="none" stroke="#f4fbf0" stroke-width="1.7" stroke-linecap="round"/></svg>
<div class="t" style="top:688.2px;font-size:16.2px;color:#111;font-weight:bold;left:605px;">餐馆</div>
<div class="t" style="top:707.6px;font-size:14.2px;color:#111;letter-spacing:0px;left:605px;">2025/10/6 - <span style="font-size:0.97em;letter-spacing:0">现金</span> - <span style="font-size:0.97em;letter-spacing:0">提醒</span></div>
<div class="t" style="top:696.0px;font-size:21.6px;color:#9b1b13;letter-spacing:0.35px;right:161.5px;">-19.35 ¥</div>
<svg style="left:530.3px;top:756.8px" width="20" height="20" viewBox="0 0 20 20"><circle cx="10" cy="10" r="9.2" fill="#6c6c6c"/><path d="M3 8.5 H11.2 V5.9 L17.6 10 L11.2 14.1 V11.5 H3 Z" fill="#fff"/></svg>
<svg style="left:558.4px;top:747.8px" width="38" height="38" viewBox="0 0 38 38"><circle cx="19" cy="19" r="18.5" fill="#64b34e"/><path d="M19.2 13.5 C21.2 12 25.4 11.7 27.8 13.3 C31 15.5 31.2 20.3 29.9 24.7 C28.7 28.7 26.4 32.5 23.6 33.3 C22 33.7 20.8 33.3 19.4 32.1 C18 33.3 16.6 33.7 15 33.3 C12.2 32.5 9.6 28.7 8.4 24.7 C7.1 20.3 7.5 15.3 10.7 13.3 C13.2 11.7 17.2 12 19.2 13.5 Z" fill="#fdfffb"/><path d="M10.3 5.3 C14.4 4.6 18.2 6.8 18.3 12.7 C13.8 12.9 11.5 9.6 10.3 5.3 Z" fill="#f0f8ea"/><path d="M12.6 7.2 C15 8.2 16.8 10 17.6 12.2" fill="none" stroke="#64b34e" stroke-width=".75"/><path d="M19.7 13 C19.9 10.2 21 8.2 23.3 7.1" fill="none" stroke="#f4fbf0" stroke-width="1.7" stroke-linecap="round"/></svg>
<div class="t" style="top:741.6px;font-size:16.2px;color:#111;font-weight:bold;left:605px;">晚餐</div>
<div class="t" style="top:760.3px;font-size:14px;color:#111;left:605px;">餐馆</div>
<div class="t" style="top:775.8px;font-size:14.2px;color:#111;letter-spacing:0px;left:605px;">2025/10/5 - <span style="font-size:0.97em;letter-spacing:0">现金</span> - <span style="font-size:0.97em;letter-spacing:0">交易</span></div>
<div class="t" style="top:756.6px;font-size:21.6px;color:#9b1b13;letter-spacing:0.35px;right:161.5px;">-56.16 ¥</div>
<svg style="left:530.3px;top:817.4px" width="20" height="20" viewBox="0 0 20 20"><circle cx="10" cy="10" r="9.2" fill="#6c6c6c"/><path d="M3 8.5 H11.2 V5.9 L17.6 10 L11.2 14.1 V11.5 H3 Z" fill="#fff"/></svg>
<svg style="left:558.4px;top:808.4px" width="38" height="38" viewBox="0 0 38 38"><circle cx="19" cy="19" r="18.5" fill="#64b34e"/><path d="M19.2 13.5 C21.2 12 25.4 11.7 27.8 13.3 C31 15.5 31.2 20.3 29.9 24.7 C28.7 28.7 26.4 32.5 23.6 33.3 C22 33.7 20.8 33.3 19.4 32.1 C18 33.3 16.6 33.7 15 33.3 C12.2 32.5 9.6 28.7 8.4 24.7 C7.1 20.3 7.5 15.3 10.7 13.3 C13.2 11.7 17.2 12 19.2 13.5 Z" fill="#fdfffb"/><path d="M10.3 5.3 C14.4 4.6 18.2 6.8 18.3 12.7 C13.8 12.9 11.5 9.6 10.3 5.3 Z" fill="#f0f8ea"/><path d="M12.6 7.2 C15 8.2 16.8 10 17.6 12.2" fill="none" stroke="#64b34e" stroke-width=".75"/><path d="M19.7 13 C19.9 10.2 21 8.2 23.3 7.1" fill="none" stroke="#f4fbf0" stroke-width="1.7" stroke-linecap="round"/></svg>
<div class="t" style="top:802.2px;font-size:16.2px;color:#111;font-weight:bold;left:605px;">杂货</div>
<div class="t" style="top:820.9px;font-size:14px;color:#111;left:605px;">无联系人</div>
<div class="t" style="top:836.4px;font-size:14.2px;color:#111;letter-spacing:0px;left:605px;">2025/10/4 - <span style="font-size:0.97em;letter-spacing:0">支票</span> - <span style="font-size:0.97em;letter-spacing:0">交易</span></div>
<div class="t" style="top:817.2px;font-size:21.6px;color:#9b1b13;letter-spacing:0.35px;right:161.5px;">-14.94 ¥</div>
<svg style="left:498.0px;top:1083.3px" width="32" height="32" viewBox="0 0 32 32"><circle cx="16" cy="16" r="14.9" fill="#fcfcfd" stroke="#606060" stroke-width="1.1"/><circle cx="16" cy="16" r="11" fill="none" stroke="#5a5a5a" stroke-width="1.35"/><path d="M16 8 V16.2 L20.2 20.2" fill="none" stroke="#4a4a4a" stroke-width="1.3" stroke-linecap="round"/></svg>
<svg style="left:1357.9px;top:1083.6px" width="32" height="32" viewBox="0 0 32 32"><circle cx="16" cy="16" r="14.9" fill="#fcfcfd" stroke="#606060" stroke-width="1.1"/><g fill="none" stroke="#616161" stroke-width="1.05" stroke-linejoin="round"><path d="M4.6 17.2 L15.4 10.4 Q17 9.6 18.6 10.4 L22 12.2 Q23 13 22.6 14.4 L21.8 18.6 Q21.4 20 20.2 20.8 L10 26.8 Q9 27.2 8.4 26.2 Z"/><circle cx="19.2" cy="14.6" r="1.7"/><path d="M19.4 14.4 L21.4 10.6 L20.4 6.6 M21.4 10.6 L24.6 7.4"/></g></svg>
<svg style="left:1401.0px;top:1083.6px" width="32" height="32" viewBox="0 0 32 32"><circle cx="16" cy="16" r="14.9" fill="#fcfcfd" stroke="#606060" stroke-width="1.1"/><g fill="none" stroke="#616161" stroke-width="1.05" stroke-linejoin="round"><rect x="6" y="9.6" width="20" height="13.8" rx="2.2"/><path d="M12.4 9.4 Q12.6 6.8 16 6.8 Q19.4 6.8 19.6 9.4" stroke-width="1.5"/><path d="M9.4 9.8 L10 23.2 M11.4 9.8 L11.6 23.2 M22.6 9.8 L22 23.2 M20.6 9.8 L20.4 23.2" stroke-width=".8"/></g></svg>
<svg style="left:1444.0px;top:1083.6px" width="32" height="32" viewBox="0 0 32 32"><circle cx="16" cy="16" r="14.9" fill="#fcfcfd" stroke="#606060" stroke-width="1.1"/><path d="M16 5 C19.4 5 21 7.6 20.8 10.8 C20.7 12.6 20.1 13.8 19.7 14.8 C19.2 16 19 17.4 19.8 18.4 C20.6 19.6 24.2 20 24.4 22.4 V24 Q24.4 24.8 23.6 24.8 H8.4 Q7.6 24.8 7.6 24 V22.4 C7.8 20 11.4 19.6 12.2 18.4 C13 17.4 12.8 16 12.3 14.8 C11.9 13.8 11.3 12.6 11.2 10.8 C11 7.6 12.6 5 16 5 Z" fill="none" stroke="#616161" stroke-width="1.05" stroke-linejoin="round" transform="translate(0,1)"/></svg>
<svg style="left:1487.1px;top:1083.6px" width="32" height="32" viewBox="0 0 32 32"><circle cx="16" cy="16" r="14.9" fill="#fcfcfd" stroke="#606060" stroke-width="1.1"/><g fill="#616161"><path d="M16 6.6 L25 10.6 V12.2 H7 V10.6 Z"/><rect x="8.4" y="13.2" width="2.3" height="8"/><rect x="12.1" y="13.2" width="2.3" height="8"/><rect x="17.6" y="13.2" width="2.3" height="8"/><rect x="21.3" y="13.2" width="2.3" height="8"/><rect x="7.6" y="21.8" width="16.8" height="1.3"/><rect x="6.8" y="23.8" width="18.4" height="1.4"/></g></svg>
<svg style="left:1530.2px;top:1083.6px" width="32" height="32" viewBox="0 0 32 32"><circle cx="16" cy="16" r="14.9" fill="#fcfcfd" stroke="#606060" stroke-width="1.1"/><g fill="none" stroke="#616161" stroke-width="1.05" stroke-linejoin="round"><path d="M14.62 7.31 L14.81 4.66 A11.4 11.4 0 0 1 17.19 4.66 L17.38 7.31 A8.8 8.8 0 0 1 19.15 7.78 L19.15 7.78 L20.64 5.59 A11.4 11.4 0 0 1 22.70 6.78 L21.54 9.16 A8.8 8.8 0 0 1 22.84 10.46 L22.84 10.46 L25.22 9.30 A11.4 11.4 0 0 1 26.41 11.36 L24.22 12.85 A8.8 8.8 0 0 1 24.69 14.62 L24.69 14.62 L27.34 14.81 A11.4 11.4 0 0 1 27.34 17.19 L24.69 17.38 A8.8 8.8 0 0 1 24.22 19.15 L24.22 19.15 L26.41 20.64 A11.4 11.4 0 0 1 25.22 22.70 L22.84 21.54 A8.8 8.8 0 0 1 21.54 22.84 L21.54 22.84 L22.70 25.22 A11.4 11.4 0 0 1 20.64 26.41 L19.15 24.22 A8.8 8.8 0 0 1 17.38 24.69 L17.38 24.69 L17.19 27.34 A11.4 11.4 0 0 1 14.81 27.34 L14.62 24.69 A8.8 8.8 0 0 1 12.85 24.22 L12.85 24.22 L11.36 26.41 A11.4 11.4 0 0 1 9.30 25.22 L10.46 22.84 A8.8 8.8 0 0 1 9.16 21.54 L9.16 21.54 L6.78 22.70 A11.4 11.4 0 0 1 5.59 20.64 L7.78 19.15 A8.8 8.8 0 0 1 7.31 17.38 L7.31 17.38 L4.66 17.19 A11.4 11.4 0 0 1 4.66 14.81 L7.31 14.62 A8.8 8.8 0 0 1 7.78 12.85 L7.78 12.85 L5.59 11.36 A11.4 11.4 0 0 1 6.78 9.30 L9.16 10.46 A8.8 8.8 0 0 1 10.46 9.16 L10.46 9.16 L9.30 6.78 A11.4 11.4 0 0 1 11.36 5.59 L12.85 7.78 A8.8 8.8 0 0 1 14.62 7.31 Z"/><circle cx="16" cy="16" r="5"/><circle cx="16" cy="16" r="2"/></g></svg>
<svg style="left:480px;top:1130px" width="50" height="46" viewBox="480 1130 50 46"><path d="M505.50 1137.00 L509.73 1149.88 L523.28 1149.92 L512.35 1157.92 L516.49 1170.83 L505.50 1162.90 L494.51 1170.83 L498.65 1157.92 L487.72 1149.92 L501.27 1149.88 Z" fill="none" stroke="#656565" stroke-width="1.15" stroke-linejoin="miter"/></svg>
<div class="t" style="top:1176.6px;font-size:13.8px;color:#656565;left:104.80000000000001px;width:800px;text-align:center;">概览</div>
<svg style="left:620px;top:1130px" width="50" height="46" viewBox="620 1130 50 46"><g fill="#2456e9"><path d="M644.9 1137.6 L661.6 1145 Q662.4 1145.4 662.4 1146.4 V1148.5 H627.6 V1146.4 Q627.6 1145.4 628.4 1145 Z"/><rect x="629.9" y="1148.4" width="5.3" height="17"/><rect x="638.7" y="1148.4" width="4.4" height="17"/><rect x="646.7" y="1148.4" width="4.4" height="17"/><rect x="654.6" y="1148.4" width="5.3" height="17"/><rect x="628.3" y="1165" width="33.4" height="2.7"/><rect x="626.2" y="1168.3" width="37.6" height="3.4" rx="1.2"/></g></svg>
<div class="t" style="top:1176.6px;font-size:13.8px;color:#2a5ae2;left:244.79999999999995px;width:800px;text-align:center;">财务</div>
<svg style="left:760px;top:1130px" width="50" height="46" viewBox="760 1130 50 46"><g fill="none" stroke="#656565" stroke-width="1.25"><rect x="768.4" y="1148.3" width="8.3" height="21.4" rx="1.8"/><rect x="780.6" y="1136.5" width="8.4" height="33.2" rx="1.8"/><rect x="792.5" y="1158.2" width="8.2" height="11.5" rx="1.8"/></g></svg>
<div class="t" style="top:1176.6px;font-size:13.8px;color:#656565;left:384.6px;width:800px;text-align:center;">分析</div>
<svg style="left:900px;top:1130px" width="50" height="46" viewBox="900 1130 50 46"><path d="M924.2 1134.6 C929.4 1134.6 932.8 1138.6 932.6 1144.2 C932.5 1146.6 931.6 1148 931.1 1149.8 C930.4 1152.4 929.7 1155 930.2 1157.6 C930.8 1160.6 934.4 1161.8 937.6 1163.6 Q939.2 1164.6 939.2 1166.4 V1169.2 Q939.2 1170.8 937.6 1170.8 H911.4 Q909.8 1170.8 909.8 1169.2 V1167.6 Q909.8 1165.8 911.4 1164.8 C913.8 1163.2 917.4 1161.6 918.6 1159.2 C919.6 1157 918.6 1154.4 917.4 1151.8 C916.4 1149.6 915.3 1147.4 915.3 1144.2 C915.3 1138.6 919 1134.6 924.2 1134.6 Z" fill="none" stroke="#656565" stroke-width="1.2" stroke-linejoin="round"/></svg>
<div class="t" style="top:1176.6px;font-size:13.8px;color:#656565;left:524.2px;width:800px;text-align:center;">联系人</div>
<svg style="left:1040px;top:1130px" width="50" height="46" viewBox="1040 1130 50 46"><g fill="none" stroke="#656565" stroke-width="1.15" stroke-linejoin="round" stroke-linecap="round"><rect x="1055.4" y="1138" width="18.2" height="12.8" rx="2.2"/><path d="M1061.4 1137.8 Q1061.6 1135.6 1064.5 1135.6 Q1067.4 1135.6 1067.6 1137.8" stroke-width="1.5"/><path d="M1051 1154.6 Q1055 1156.4 1059 1154.6 Q1062 1155.4 1062.4 1158.4 L1062.6 1170 H1059.8 L1059.6 1170.6 H1050.4 L1050.2 1170 H1047.6 L1047.8 1158.4 Q1048 1155.4 1051 1154.6 Z"/><path d="M1050.4 1170 L1050.6 1160 M1059.6 1170 L1059.4 1160"/><path d="M1064.8 1159.6 Q1064.2 1156.6 1067.6 1155.4 Q1073.4 1153.6 1079.2 1155.4 Q1082.8 1156.6 1082 1159.6 Q1081.6 1161 1080 1160.8 L1078 1160.4 Q1077 1160 1077.2 1158.6 H1069.6 Q1069.8 1160 1068.8 1160.4 L1066.8 1160.8 Q1065.2 1161 1064.8 1159.6 Z"/><path d="M1069.6 1159.8 Q1066.6 1164 1066.8 1169 Q1066.8 1170.4 1068.2 1170.4 H1078.8 Q1080.2 1170.4 1080.2 1169 Q1080.4 1164 1077.4 1159.8"/></g></svg>
<div class="t" style="top:1176.6px;font-size:13.8px;color:#656565;left:664.2px;width:800px;text-align:center;">类别</div>
<svg style="left:1180px;top:1130px" width="50" height="46" viewBox="1180 1130 50 46"><g fill="none" stroke="#656565" stroke-width="1.2" stroke-linejoin="round"><path d="M1201.52 1138.38 L1201.86 1134.30 A18.6 18.6 0 0 1 1205.74 1134.30 L1206.08 1138.38 A14.6 14.6 0 0 1 1209.03 1139.17 L1209.03 1139.17 L1211.37 1135.81 A18.6 18.6 0 0 1 1214.73 1137.75 L1212.99 1141.45 A14.6 14.6 0 0 1 1215.15 1143.61 L1215.15 1143.61 L1218.85 1141.87 A18.6 18.6 0 0 1 1220.79 1145.23 L1217.43 1147.57 A14.6 14.6 0 0 1 1218.22 1150.52 L1218.22 1150.52 L1222.30 1150.86 A18.6 18.6 0 0 1 1222.30 1154.74 L1218.22 1155.08 A14.6 14.6 0 0 1 1217.43 1158.03 L1217.43 1158.03 L1220.79 1160.37 A18.6 18.6 0 0 1 1218.85 1163.73 L1215.15 1161.99 A14.6 14.6 0 0 1 1212.99 1164.15 L1212.99 1164.15 L1214.73 1167.85 A18.6 18.6 0 0 1 1211.37 1169.79 L1209.03 1166.43 A14.6 14.6 0 0 1 1206.08 1167.22 L1206.08 1167.22 L1205.74 1171.30 A18.6 18.6 0 0 1 1201.86 1171.30 L1201.52 1167.22 A14.6 14.6 0 0 1 1198.57 1166.43 L1198.57 1166.43 L1196.23 1169.79 A18.6 18.6 0 0 1 1192.87 1167.85 L1194.61 1164.15 A14.6 14.6 0 0 1 1192.45 1161.99 L1192.45 1161.99 L1188.75 1163.73 A18.6 18.6 0 0 1 1186.81 1160.37 L1190.17 1158.03 A14.6 14.6 0 0 1 1189.38 1155.08 L1189.38 1155.08 L1185.30 1154.74 A18.6 18.6 0 0 1 1185.30 1150.86 L1189.38 1150.52 A14.6 14.6 0 0 1 1190.17 1147.57 L1190.17 1147.57 L1186.81 1145.23 A18.6 18.6 0 0 1 1188.75 1141.87 L1192.45 1143.61 A14.6 14.6 0 0 1 1194.61 1141.45 L1194.61 1141.45 L1192.87 1137.75 A18.6 18.6 0 0 1 1196.23 1135.81 L1198.57 1139.17 A14.6 14.6 0 0 1 1201.52 1138.38 Z"/><circle cx="1203.8" cy="1152.8" r="8.2"/><circle cx="1203.8" cy="1152.8" r="3.4"/></g></svg>
<div class="t" style="top:1176.6px;font-size:13.8px;color:#656565;left:803.8px;width:800px;text-align:center;">数据库</div>
</div></div>
</body></html>
